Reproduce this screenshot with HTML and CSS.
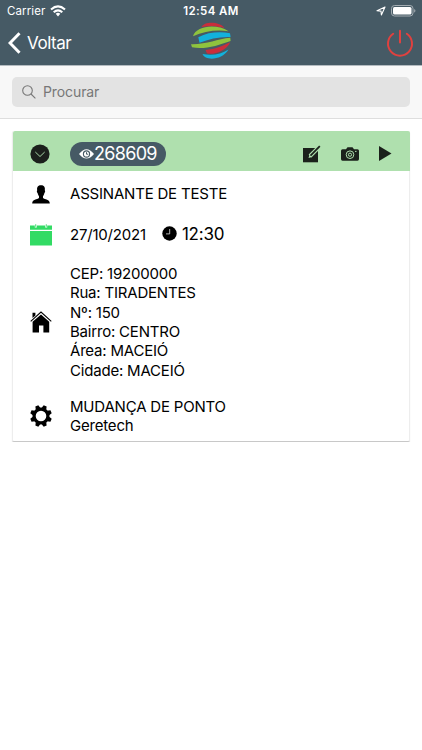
FILE: index.html
```html
<!DOCTYPE html>
<html lang="pt-BR">
<head>
<meta charset="utf-8">
<meta name="viewport" content="width=device-width">
<title>Ordem de serviço</title>
<link rel="stylesheet" href="styles.css">
</head>
<body>
<header class="header">
  <div class="status">
    <div class="status-left"><span class="carrier">Carrier</span>
      <svg width="16" height="12" viewBox="0 0 16 12" fill="none" stroke="#fff" stroke-width="2.1"><path d="M1 4.5Q8-1.8 15 4.5M3.7 7.3Q8 3.5 12.3 7.3"/><path d="M5.7 8.8Q8 6.8 10.3 8.8L8 11.4Z" fill="#fff" stroke="none"/></svg>
    </div>
    <span class="clock">12:54 AM</span>
    <div class="status-right">
      <svg width="10" height="10" viewBox="0 0 10 10" fill="none" stroke="#fff" stroke-width="1.1" stroke-linejoin="round"><path d="M9 1L1 4.7L5 5.1L5.4 9Z"/></svg>
      <svg width="25" height="12" viewBox="0 0 25 12"><rect x=".5" y=".5" width="21.5" height="10.5" rx="3" fill="none" stroke="#a3acb2"/><rect x="2" y="2" width="18.5" height="7.5" rx="1.5" fill="#fff"/><path d="M23.2 4v3.6q1.2-.4 1.2-1.8t-1.2-1.8" fill="#a3acb2"/></svg>
    </div>
  </div>
  <div class="nav">
    <div class="back">
      <svg width="13" height="22" viewBox="0 0 13 22" fill="none" stroke="#fff" stroke-width="3"><path d="M11.5 1.2L2 11L11.5 20.8"/></svg>
      <span class="back-label">Voltar</span>
    </div>
    <svg class="logo" width="42" height="38" viewBox="190 21 42 38">
      <path d="M201.5 27C204 21.5 219 21 224.5 28C217 26 209 25.5 201.5 27Z" fill="#c92e3b"/>
      <path d="M193 36.3C196 26 216 23.3 228.5 31.2C217 29.6 204 31 193 36.3Z" fill="#8fc33e"/>
      <path d="M198.3 37.2C208 32 220 31.5 230 33.2L230.6 37C220 36.5 209 39 199.5 42.7Z" fill="#12b1dc"/>
      <path d="M191 44.2C207 44.5 217 39 230.3 37.8L230.6 41C218 45.5 204 50 192 47.3Z" fill="#8fc33e"/>
      <path d="M205.5 50C215 49.3 222 46 230.3 42.3C226 51 215 55 207 53.6Z" fill="#c92e3b"/>
      <path d="M202.5 54C213 56 221 54 228.5 49.5C222 60.5 205 61 202.5 54Z" fill="#12b1dc"/>
    </svg>
    <svg class="power" width="28" height="28" viewBox="0 0 28 28" fill="none" stroke="#e0413f" stroke-width="2" stroke-linecap="round"><path d="M7.2 4.8A12 12 0 1 0 20.8 4.8M14 1.7V13.5"/></svg>
  </div>
</header>
<div class="searchbar">
  <div class="search">
    <svg width="14" height="14" viewBox="0 0 14 14" fill="none" stroke="#777" stroke-width="1.1"><circle cx="5.5" cy="5.5" r="4.8"/><path d="M9 9L13.4 13.3"/></svg>
    <span class="placeholder">Procurar</span>
  </div>
</div>
<main class="card">
  <div class="card-head">
    <svg class="toggle" width="20" height="20" viewBox="0 0 20 20"><circle cx="10" cy="10" r="9.6" fill="#1c201c"/><path d="M5.3 8L10 12.5L14.7 8" fill="none" stroke="#a5d3a4" stroke-width="1"/></svg>
    <div class="badge">
      <svg width="15" height="10" viewBox="0 0 15 10"><path d="M0 5Q7.5-4.5 15 5Q7.5 14 0 5Z" fill="#fff"/><circle cx="7.5" cy="5" r="3.1" fill="none" stroke="#465a65" stroke-width="1.1"/><path d="M7.5 3.2V5.2H9.2" stroke="#465a65" stroke-width="1" fill="none"/></svg>
      <span class="number">268609</span>
    </div>
    <div class="actions">
      <svg width="18" height="18" viewBox="0 0 18 18"><path d="M0 3H15V17.3H0Z" fill="#1b211b"/><path d="M7 11L16.7 1.5" stroke="#afe0ae" stroke-width="4"/><path d="M5.5 13L6.6 9.6L9 11.9Z" fill="#afe0ae"/><path d="M7.5 10.6L16.8 1.2" stroke="#1b211b" stroke-width="1.8"/></svg>
      <svg class="camera" width="18" height="14" viewBox="0 0 18 14"><path d="M1.5 2.3H5L6.5.3H11.5L13 2.3H16.5Q18 2.3 18 3.8V12Q18 13.7 16.5 13.7H1.5Q0 13.7 0 12V3.8Q0 2.3 1.5 2.3Z" fill="#1b211b"/><circle cx="9" cy="7.7" r="3.8" fill="none" stroke="#afe0ae" stroke-width="1"/><circle cx="9" cy="7.7" r="1.6" fill="none" stroke="#afe0ae" stroke-width="1"/><path d="M14 4.4H15.5" stroke="#afe0ae"/></svg>
      <svg class="play" width="13" height="15" viewBox="0 0 13 15"><path d="M0 0L12.5 7.5L0 15Z" fill="#1b211b"/></svg>
    </div>
  </div>
  <div class="row row-person">
    <div class="icon"><svg width="18" height="19" viewBox="0 0 18 19"><path d="M9 .3C5.2.3 4.8 3 5.2 5.2C4.5 6.2 5 7.4 5.6 8C6 9.7 6.6 10.6 7 11.3V13.1C5.2 14.6.2 14.3.2 18.6H17.8C17.8 14.3 12.8 14.6 11 13.1V11.3C11.5 10.6 12 9.7 12.4 8C13 7.4 13.5 6.2 12.8 5.2C13.2 3 12.8.3 9 .3Z"/></svg></div>
    <span class="name">ASSINANTE DE TESTE</span>
  </div>
  <div class="row row-date">
    <div class="icon"><svg width="22" height="22" viewBox="0 0 22 22" fill="#32db64"><path d="M0 1.5H4.8V3.5H6.8V1.5H15.2V3.5H17.2V1.5H22V5.8H0ZM0 7H22V21.5H0ZM5.3.3H6.2V2.8H5.3ZM15.8.3H16.7V2.8H15.8Z"/></svg></div>
    <span class="date">27/10/2021</span>
    <svg class="watch" width="15" height="15" viewBox="0 0 15 15"><circle cx="7.5" cy="7.5" r="7.2"/><path d="M7.7 3V7.9H4" fill="none" stroke="#ddd" stroke-width=".8"/></svg>
    <span class="time">12:30</span>
  </div>
  <div class="row row-address">
    <div class="icon"><svg width="22" height="22" viewBox="0 0 22 22"><path d="M11 3.4L19.2 10.8V21.5H13.4V14.5H9V21.5H2.6V10.8Z"/><path d="M.7 10.3L11 1.1L21.3 10.3" fill="none" stroke="#000" stroke-width="1.1"/><path d="M2.5 1.8H5.4V4.4L2.5 7Z"/></svg></div>
    <div class="lines"><div>CEP: 19200000</div><div>Rua: TIRADENTES</div><div>Nº: 150</div><div>Bairro: CENTRO</div><div>Área: MACEIÓ</div><div>Cidade: MACEIÓ</div></div>
  </div>
  <div class="row row-service">
    <div class="icon"><svg width="22" height="22" viewBox="-11 -11 22 22"><circle r="6.9" fill="none" stroke="#000" stroke-width="3.2"/><g id="teeth"><path id="tooth" d="M-2.5-7.5L-1.6-10.9H1.6L2.5-7.5Z" transform="rotate(22.5)"/><use href="#tooth" transform="rotate(45)"/><use href="#tooth" transform="rotate(90)"/><use href="#tooth" transform="rotate(135)"/></g><use href="#teeth" transform="rotate(180)"/></svg></div>
    <div class="lines"><div>MUDANÇA DE PONTO</div><div>Geretech</div></div>
  </div>
</main>
</body>
</html>
```
FILE: styles.css
```css
* { box-sizing: border-box; }
body { margin: 0; background: #fff; color: #000; font: 15px/19.4px Inter, "Liberation Sans", sans-serif; letter-spacing: -0.2px; }
svg { display: block; flex: none; }
span, .lines div { white-space: nowrap; }
.header { height: 66px; background: #465a65; border-bottom: 1px solid #b4bbc0; color: #fff; }
.status { height: 21px; display: grid; grid-template-columns: 1fr auto 1fr; align-items: center; padding: 1px 7px 0; font-size: 11.5px; line-height: 20px; }
.status-left { display: flex; align-items: center; gap: 5px; letter-spacing: 0.1px; }
.clock { font-weight: 600; letter-spacing: 0.4px; }
.status-right { display: flex; align-items: center; justify-content: flex-end; gap: 5px; margin-right: -1px; }
.nav { height: 44px; display: grid; grid-template-columns: 1fr auto 1fr; align-items: center; padding: 0 8px; }
.back { display: flex; align-items: center; gap: 6px; }
.back-label { font-size: 17px; line-height: 22px; letter-spacing: -0.45px; }
.logo { margin-top: -6px; }
.power { justify-self: end; }
.searchbar { height: 53px; background: #f8f8f8; border-bottom: 1px solid #dedede; padding: 11px 12px 0; }
.search { height: 30px; display: flex; align-items: center; padding-left: 10px; gap: 7px; background: #e3e3e3; border-radius: 5px; color: #777; }
.placeholder { font-size: 14px; letter-spacing: -0.1px; }
.card { margin: 12px 12px 0; height: 311px; border: 1px solid #ededed; border-top: 0; border-bottom: 1px solid #c8c8c8; border-radius: 2px; box-shadow: 0 1px 1px #ddd; background: #fff; }
.card-head { height: 40px; background: #afe0ae; margin: 0 -1px 0 0; padding: 5px 18px 0 17px; display: flex; align-items: center; border-radius: 2px 2px 0 0; }
.badge { width: 96px; height: 24px; margin-left: 20px; padding-left: 9px; display: flex; align-items: center; border-radius: 12px; background: #465a65; color: #fff; }
.number { font-size: 18px; line-height: 24px; letter-spacing: -0.7px; }
.actions { margin-left: auto; display: flex; align-items: center; gap: 20px; }
.row { display: flex; align-items: center; padding-left: 16px; }
.icon { width: 23px; margin-right: 18px; display: flex; justify-content: center; }
.row-person { height: 46px; }
.row-date { height: 35px; }
.watch { margin: -2px 0 0 16px; }
.time { margin-left: 5px; font-size: 17px; letter-spacing: -0.2px; }
.row-address { height: 140px; }
.row-service { height: 48px; }
```
